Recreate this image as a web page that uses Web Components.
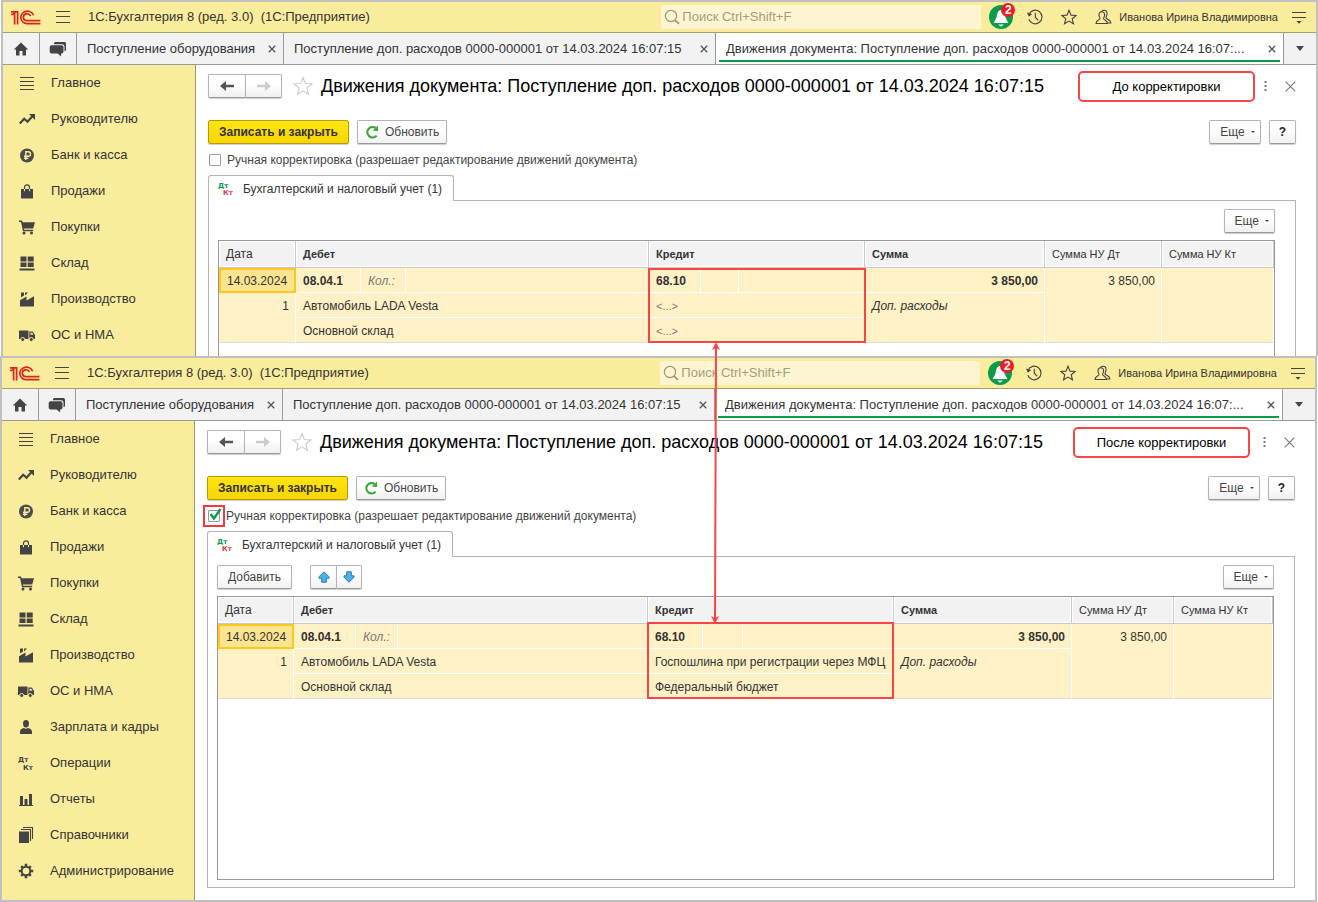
<!DOCTYPE html>
<html lang="ru">
<head>
<meta charset="utf-8">
<title>1С:Бухгалтерия 8 — Движения документа</title>
<style>
  body { margin: 0; background: #fff; color: #333; font: 13px/16px "Liberation Sans", Arial, sans-serif; }
</style>
</head>
<body>
<compare-page>
  <app-window class="before" sections="8">
    <doc-view note="До корректировки">
      <entries-table slot="table" variant="before"></entries-table>
    </doc-view>
  </app-window>
  <app-window class="after" sections="13">
    <doc-view note="После корректировки" manual>
      <entries-table slot="table" variant="after"></entries-table>
    </doc-view>
  </app-window>
</compare-page>

<script>
const ICONS = {
  logo: [30, 15, '<g fill="none" stroke="#da251d" stroke-width="1.7"><path d="M0 4.5h1.6L3.6 3v11.4"/><path d="M0 1.800H6.600v12.600"/><path d="M22.6 5.2A6.6 6.2 0 1 0 16 13.6h13.4"/><path d="M19.5 6A3.7 3.4 0 1 0 16 10.6h13.4"/></g>'],
  burger: [14, 14, '<path d="M0 1.500h14M0 6.500h14M0 12.500h14" stroke="#444" stroke-width="1"/>'],
  search: [16, 16, '<g fill="none" stroke="#9d966d" stroke-width="1.2"><circle cx="7" cy="7" r="5.6"/><path d="m11 11.2 4 3.6" stroke-width="1.8"/></g>'],
  bell: [24, 26, '<circle cx="12" cy="13" r="12" fill="#0a9b4b"/><path d="M11.500 6c-2.800.8-3.300 4-3.800 6.500-.5 2.400-2 4-3 6.500h14.600c-1-2.500-2.500-4.100-3-6.500-.5-2.500-1-5.700-4.800-6.500zM9.200 20.500h5.600L12 22.800z" fill="#fff"/>'],
  history: [16, 16, '<g fill="none" stroke="#444" stroke-width="1.1"><path d="M2 5.200A6.800 6.800 0 1 1 1.800 10.300"/><path d="M8.300 3.800V8.200l3 3.200"/></g><path d="m0 3.500 1.800 4.200L5.300 5z" fill="#444"/>'],
  star: [16, 16, '<path d="m8 1.200 2 4.900 5.200.3-4 3.400 1.300 5L8 12.100l-4.500 2.700 1.300-5-4-3.400 5.200-.3z" fill="none" stroke="#444" stroke-width="1.100"/>'],
  bigstar: [20, 20, '<path d="m10 1.500 2.400 6 6.400.4-5 4.100 1.700 6.300L10 14.800l-5.500 3.500 1.700-6.300-5-4.100 6.400-.4z" fill="#fff" stroke="#ccc" stroke-width="1.100"/>'],
  users: [18, 16, '<g fill="#faec9d" stroke="#444" stroke-width="1.100"><path d="M6 5C6 2.500 7 1.200 9 1.200s3.200 1.300 3 3.800c-.1 1.800-1 2.800-1 3.800.3 1.800 4.700 1.500 4.900 5.200H12"/><path d="M4 6c0-2 1-3.300 2.800-3.300S9.600 4 9.600 6c0 1.600-.9 2.500-1.100 3.500.3 1.700 4 1.700 4 5H1c0-3.300 3.800-3.300 4.100-5C4.900 8.500 4 7.600 4 6z"/></g>'],
  view: [16, 16, '<path d="M1 3.500h14M1 8.500h14" stroke="#444" stroke-width="1.200"/><path d="M5.500 12h5L8 14.800z" fill="#444"/>'],
  home: [16, 16, '<path d="m8 1.500 7.200 7H13v6H9.500V10h-3v4.500H3v-6H.8z" fill="#444"/>'],
  chat: [18, 16, '<path d="M5 3.300V2.500C5 1.500 5.700 1 6.700 1h8.500C16.200 1 17 1.700 17 2.700v5.800c0 1-.6 1.700-1.500 1.800V5.800c0-1.600-.8-2.500-2.500-2.500z" fill="#444"/><path d="M2.700 4.300h9.800c1.200 0 2 .8 2 2v4.200c0 1.200-.8 2-2 2h-.4V15.500l-3.600-3H2.700c-1.200 0-2-.8-2-2V6.300c0-1.200.8-2 2-2z" fill="#444"/>'],
  cross: [8, 8, '<path d="m.8.8 6.400 6.400M7.200.8.8 7.200" stroke="#555" stroke-width="1.300"/>'],
  close: [11, 11, '<path d="m.7.7 9.600 9.600M10.300.7.7 10.300" stroke="#777" stroke-width="1.100"/>'],
  caret: [8, 5, '<path d="M0 0h8L4 5z" fill="#444"/>'],
  minicaret: [4, 2, '<path d="M0 0h4L2 2z" fill="#444"/>'],
  dots: [3, 12, '<path d="M.5 1h2v2h-2zM.5 5h2v2h-2zM.5 9h2v2h-2z" fill="#777"/>'],
  back: [16, 12, '<path d="M1 6 7 1v3.800h8v2.400H7V11z" fill="#555"/>'],
  forward: [16, 12, '<path d="M15 6 9 1v3.800H1v2.400h8V11z" fill="#ccc"/>'],
  refresh: [14, 14, '<path d="M11.600 10.600A5.200 5.200 0 1 1 10.600 3" fill="none" stroke="#3aa63a" stroke-width="2.200"/><path d="M7.800 5.800 13 6V.6z" fill="#3aa63a"/>'],
  up: [12, 12, '<path d="m6 .8 5 5v1.400H8.300v4H3.700v-4H1V5.800z" fill="#4cb1ee" stroke="#3179a8" stroke-width="1"/>'],
  down: [12, 12, '<path d="m6 11.200 5-5V4.800H8.300v-4H3.700v4H1v1.400z" fill="#4cb1ee" stroke="#3179a8" stroke-width="1"/>'],
  dtkt: [16, 16, '<g font-family="DejaVu Sans" font-weight="bold" font-size="7"><text x="0" y="7" fill="#0a9b4b">Дт</text><text x="5" y="14" fill="#e04040">Кт</text></g>'],
  main: [16, 16, '<path d="M1 2.500h14M1 6.500h14M1 10.500h14M1 14.500h14" stroke="#444" stroke-width="1.100"/>'],
  trend: [16, 16, '<path d="m.8 12.500 4.400-4.700 3.300 3 4.700-5.200" fill="none" stroke="#444" stroke-width="2.200"/><path d="M10 3h6v6z" fill="#444"/>'],
  ruble: [16, 16, '<circle cx="8" cy="8.500" r="7" fill="#4d4d4d"/><path d="M6.800 13V4.800h2.500a2.200 2.200 0 0 1 0 4.400H5M5 11.200h4.300" fill="none" stroke="#faec9d" stroke-width="1.400"/>'],
  bag: [16, 16, '<path d="M2 6h12v9.500H2z" fill="#444"/><path d="M5.500 8V4.500C5.500 1 10.500 1 10.500 4.500V8" fill="none" stroke="#444" stroke-width="1.200"/><path d="M5.500 6v2.200M10.500 6v2.200" stroke="#faec9d" stroke-width="1"/>'],
  cart: [16, 16, '<path d="M0 1.500h3l.7 1.700H16l-1.800 6.300H4.800l.4 1.300h9v1.400H4L2 3H0z" fill="#444"/><circle cx="5" cy="14" r="1.500" fill="#444"/><circle cx="12.500" cy="14" r="1.500" fill="#444"/>'],
  stock: [16, 16, '<path d="M1.500 1.500h6v5h-6zM8.700 1.500h6v5h-6zM1.500 7.500h6v4.500h-6zM8.700 7.500h6v4.500h-6zM.5 13.500h15v2H.5z" fill="#444"/>'],
  factory: [16, 16, '<path d="M1 15.500V9.200l6.500-3.700v4l7.500-4.200v10.200z" fill="#444"/><path d="M2 1.500h3v3L2 6.500zM6 1.500h3L6 4.500z" fill="#444"/>'],
  truck: [16, 16, '<path d="M0 3.500h9.500v8.500H0z" fill="#444"/><path d="M10.300 4.500h3.400l2.300 3.300v4.200h-5.700z" fill="#444"/><path d="M11.500 5.800h1.800l1.200 2h-3z" fill="#faec9d"/><g fill="#444" stroke="#faec9d"><circle cx="3.700" cy="12.500" r="2"/><circle cx="12.300" cy="12.500" r="2"/></g>'],
  person: [16, 16, '<path d="M5 4.500C5 2 6.300 1 8 1s3 1 3 3.500S9.800 8.500 8 8.500 5 7 5 4.500zM2 15v-2c0-2.500 1.500-3.500 4-4 1.300.9 2.700.9 4 0 2.500.5 4 1.500 4 4v2z" fill="#444"/>'],
  ops: [16, 16, '<g font-family="DejaVu Sans" font-weight="bold" font-size="7" fill="#444"><text x="0" y="7">Дт</text><text x="5" y="15">Кт</text></g>'],
  chart: [16, 16, '<path d="M1 14h14v1H1zM2 5h3v9H2zM6.500 8h3v6h-3zM11 3h3v11h-3z" fill="#444"/>'],
  books: [16, 18, '<path d="M1 5.500h10V17H1z" fill="#444"/><path d="M3 3.500h9.500V15M5 1.500h9.500V13" fill="none" stroke="#444" stroke-width="1.100"/>'],
  gear: [16, 16, '<g transform="translate(8 8)"><circle r="4.300" fill="none" stroke="#444" stroke-width="2"/><g fill="#444"><path d="M-1.300-7.200h2.600v2.700h-2.600zM-1.300 4.500h2.600v2.700h-2.600zM-7.200-1.300h2.700v2.600h-2.700zM4.500-1.300h2.700v2.600H4.500z"/><path transform="rotate(45)" d="M-1.200-6.800h2.400v2.300h-2.400zM-1.200 4.500h2.400v2.300h-2.400zM-6.800-1.200h2.300v2.400h-2.300zM4.500-1.200h2.300v2.400H4.500z"/></g></g>']
};

const SECTIONS = [
  ['main', 'Главное'], ['trend', 'Руководителю'], ['ruble', 'Банк и касса'], ['bag', 'Продажи'],
  ['cart', 'Покупки'], ['stock', 'Склад'], ['factory', 'Производство'], ['truck', 'ОС и НМА'],
  ['person', 'Зарплата и кадры'], ['ops', 'Операции'], ['chart', 'Отчеты'], ['books', 'Справочники'],
  ['gear', 'Администрирование']
];

const define = (name, render) => customElements.define(name, class extends HTMLElement {
  connectedCallback() {
    if (this.shadowRoot) return;
    this.attachShadow({ mode: 'open' }).innerHTML = render(this);
  }
});

define('ui-icon', el => {
  const [w, h, body] = ICONS[el.getAttribute('name')];
  return `<style>
    :host { display: block; flex: none; width: ${w}px; height: ${h}px; }
    svg { display: block; }
  </style><svg width="${w}" height="${h}" viewBox="0 0 ${w} ${h}" aria-hidden="true">${body}</svg>`;
});

define('ui-button', el => `<style>
  :host { display: block; flex: none; }
  button {
    box-sizing: border-box; width: 100%; height: 24px; padding: 0 var(--pad, 10px); display: flex; align-items: center;
    justify-content: center; gap: 6px; border: 1px solid #b3b3b3; border-bottom-color: #999; border-radius: 2px;
    background: linear-gradient(#fff 40%, #f0f0f0); box-shadow: 0 1px 1px #0003; color: #444;
    font: inherit; font-size: 12px; white-space: nowrap;
  }
  :host([primary]) button { background: linear-gradient(#ffe512, #f7d500); border-color: #b39b00; color: #333; font-weight: bold; }
  :host([menu]) button { padding: 0 5px 0 10px; }
  :host([first]) button { border-radius: 2px 0 0 2px; border-right: 0; }
  :host([last]) button { border-radius: 0 2px 2px 0; }
  :host([strong]) button { font-weight: bold; color: #222; }
</style><button type="button" aria-label="${el.getAttribute('label') || el.textContent.trim()}"><slot></slot></button>`);

define('app-topbar', () => `<style>
  :host { display: flex; align-items: center; height: 30px; padding: 0 9px 0 8px; background: #faec9d; border-bottom: 1px solid #a89f6b; }
  ui-icon[name=burger] { margin-left: 15px; }
  .title { flex: 1; margin-left: 18px; white-space: pre; overflow: hidden; }
  .search { display: flex; align-items: center; gap: 2px; box-sizing: border-box; width: 320px; height: 24px; padding: 0 3px; background: #fdf5d2; border-radius: 2px; }
  input { flex: 1; min-width: 0; border: 0; padding: 0; background: none; font: inherit; color: #333; }
  input::placeholder { color: #a29c7e; opacity: 1; }
  .bell { position: relative; margin-left: 8px; }
  .badge { position: absolute; right: -2px; top: -1px; width: 14px; height: 14px; border-radius: 7px; background: #ed1c24; color: #fff; font-size: 12px; font-weight: bold; line-height: 14px; text-align: center; }
  .tools { display: flex; gap: 18px; margin: 0 6px 0 14px; }
  .user { font-size: 11px; color: #333; text-decoration: none; margin-right: 13px; }
</style>
<ui-icon name="logo"></ui-icon><ui-icon name="burger"></ui-icon>
<span class="title">1С:Бухгалтерия 8 (ред. 3.0)  (1С:Предприятие)</span>
<label class="search"><ui-icon name="search"></ui-icon><input type="search" placeholder="Поиск Ctrl+Shift+F" aria-label="Поиск"></label>
<span class="bell"><ui-icon name="bell"></ui-icon><span class="badge">2</span></span>
<span class="tools"><ui-icon name="history"></ui-icon><ui-icon name="star"></ui-icon><ui-icon name="users"></ui-icon></span>
<a class="user" href="#user">Иванова Ирина Владимировна</a>
<ui-icon name="view"></ui-icon>`);

define('app-tab', () => `<style>
  :host { position: relative; display: flex; align-items: center; gap: 9px; box-sizing: border-box; padding: 0 7px 0 10px; border-right: 1px solid #999; background: #f2f2f2; }
  :host([current]) { flex: 1; min-width: 0; background: #fff; }
  :host([current])::after { content: ""; position: absolute; left: 3px; right: 3px; bottom: 2px; height: 2px; background: #0a9b4b; }
  a { flex: 1; min-width: 0; color: #333; text-decoration: none; white-space: nowrap; overflow: hidden; text-overflow: ellipsis; }
  button { display: block; padding: 0; border: 0; background: none; }
</style><a href="#tab"><slot></slot></a><button type="button" aria-label="Закрыть вкладку"><ui-icon name="cross"></ui-icon></button>`);

define('app-tabs', () => `<style>
  :host { display: flex; height: 31px; background: #f2f2f2; border-bottom: 1px solid #999; }
  .square { display: grid; place-items: center; box-sizing: border-box; width: 37px; padding: 0; border: 0; border-right: 1px solid #999; background: none; }
  .more { width: 32px; border-right: 0; }
  .short { width: 207px; }
  .long { width: 432px; }
</style>
<button class="square" type="button" aria-label="Начальная страница"><ui-icon name="home"></ui-icon></button>
<button class="square" type="button" aria-label="Обсуждения"><ui-icon name="chat"></ui-icon></button>
<app-tab class="short">Поступление оборудования</app-tab>
<app-tab class="long">Поступление доп. расходов 0000-000001 от 14.03.2024 16:07:15</app-tab>
<app-tab current>Движения документа: Поступление доп. расходов 0000-000001 от 14.03.2024 16:07:...</app-tab>
<button class="square more" type="button" aria-label="Все вкладки"><ui-icon name="caret"></ui-icon></button>`);

define('side-nav', el => `<style>
  :host { display: block; flex: none; box-sizing: border-box; width: 193px; padding-bottom: 3px; background: #faec9d; border-right: 1px solid #a09a6a; }
  a { display: flex; align-items: center; gap: 16px; height: 36px; padding-left: 16px; color: #333; text-decoration: none; white-space: nowrap; }
</style><nav>${SECTIONS.slice(0, +el.getAttribute('count')).map(([icon, name]) =>
  `<a href="#${icon}"><ui-icon name="${icon}"></ui-icon>${name}</a>`).join('')}</nav>`);

define('doc-view', el => {
  const manual = el.hasAttribute('manual');
  return `<style>
  :host { display: flex; flex-direction: column; flex: 1; min-width: 0; padding: 5px 20px var(--bottom) 12px; background: #fff; }
  .head { display: flex; align-items: center; height: 32px; }
  .nav { display: flex; margin-right: 11px; }
  .nav ui-button { width: 37px; --pad: 0; }
  h1 { flex: 1; min-width: 0; margin: 0 0 0 8px; font-size: 18px; line-height: 24px; font-weight: normal; color: #000; white-space: nowrap; }
  .note { box-sizing: border-box; width: 177px; height: 31px; margin-right: var(--note-gap); border: 2px solid #f94545; border-radius: 5px; line-height: 27px; text-align: center; color: #000; }
  .plain { display: grid; place-items: center; width: 16px; height: 16px; padding: 0; border: 0; background: none; }
  .plain.close { width: 11px; margin: 0 0 0 12px; }
  .bar { display: flex; gap: 8px; margin-top: 18px; }
  .push { margin-left: auto; }
  .renew { --pad: 7px; }
  .help { --pad: 9px; }
  .check { display: flex; align-items: center; gap: 6px; height: 16px; margin: 8px 0 7px 1px; color: #444; font-size: 12px; }
  .box { position: relative; display: flex; }
  input { appearance: none; box-sizing: border-box; width: 12px; height: 12px; margin: 0; border: 1px solid #999; border-radius: 1px; background: #fff; }
  .box svg { position: absolute; left: 1px; top: -2px; }
  .mark { position: absolute; inset: -5px; border: 2px solid #f0393e; }
  .tab { position: relative; align-self: flex-start; display: flex; align-items: center; gap: 9px; box-sizing: border-box; height: 26px; margin-bottom: -1px; padding: 0 11px 0 9px; background: #fff; border: 1px solid #b3b3b3; border-bottom: 0; border-radius: 3px 3px 0 0; }
  .tab a { color: #333; text-decoration: none; font-size: 12px; }
  .panel { flex: 1; display: flex; flex-direction: column; padding: 8px 20px var(--panel-bottom) 9px; border: 1px solid #b3b3b3; border-bottom-width: var(--edge); }
  .panel .bar { margin: 0 0 7px; gap: 18px; }
  .pair { display: flex; }
  .pair ui-button { width: 26px; --pad: 0; }
</style>
<div class="head">
  <div class="nav"><ui-button first label="Назад"><ui-icon name="back"></ui-icon></ui-button><ui-button last label="Вперед"><ui-icon name="forward"></ui-icon></ui-button></div>
  <ui-icon name="bigstar"></ui-icon>
  <h1>Движения документа: Поступление доп. расходов 0000-000001 от 14.03.2024 16:07:15</h1>
  <div class="note">${el.getAttribute('note')}</div>
  <button class="plain" type="button" aria-label="Действия"><ui-icon name="dots"></ui-icon></button>
  <button class="plain close" type="button" aria-label="Закрыть"><ui-icon name="close"></ui-icon></button>
</div>
<div class="bar">
  <ui-button primary>Записать и закрыть</ui-button>
  <ui-button class="renew"><ui-icon name="refresh"></ui-icon>Обновить</ui-button>
  <ui-button class="push" menu>Еще<ui-icon name="minicaret"></ui-icon></ui-button>
  <ui-button class="help" strong>?</ui-button>
</div>
<div class="check">
  <span class="box"><input type="checkbox" id="manual" ${manual ? 'checked' : ''}>${manual ? '<svg width="13" height="13" viewBox="0 0 13 13"><path d="m1.500 6 3.500 4.500L11.500 1" fill="none" stroke="#0a9b4b" stroke-width="2.400"/></svg><span class="mark"></span>' : ''}</span>
  <label for="manual">Ручная корректировка (разрешает редактирование движений документа)</label>
</div>
<div class="tab"><ui-icon name="dtkt"></ui-icon><a href="#entries">Бухгалтерский и налоговый учет (1)</a></div>
<section class="panel">
  <div class="bar">
    ${manual ? `<ui-button>Добавить</ui-button><div class="pair"><ui-button first label="Вверх"><ui-icon name="up"></ui-icon></ui-button><ui-button last label="Вниз"><ui-icon name="down"></ui-icon></ui-button></div>` : ''}
    <ui-button class="push" menu>Еще<ui-icon name="minicaret"></ui-icon></ui-button>
  </div>
  <slot name="table"></slot>
</section>`;
});

define('entries-table', el => {
  const after = el.getAttribute('variant') === 'after';
  const cols = after ? [76, 62, 42, 0, 55, 40, 151, 178, 102, 99] : [77, 65, 45, 0, 52, 38, 126, 180, 117, 112];
  return `<style>
  :host { display: block; flex: 1; border: 1px solid #999; border-bottom-width: var(--edge); background: #fff; }
  table { width: 100%; table-layout: fixed; border-collapse: separate; border-spacing: 0; }
  th, td { box-sizing: border-box; padding: 0 6px 0 7px; white-space: nowrap; text-align: left; border-right: 1px solid #fff; border-bottom: 1px solid #fff; }
  th { height: 27px; background: #f2f2f2; border-color: #c8c8c8; box-shadow: inset 0 0 0 1px #fff; font-size: 11px; line-height: 16px; }
  th.light { font-weight: normal; }
  th.day { font-size: 12px; }
  td { height: 25px; padding-top: 2px; background: #fef1c6; font-size: 12px; line-height: 16px; }
  td.top { vertical-align: top; padding-top: 5px; }
  td.last { border-bottom-color: #ddd; }
  .num { text-align: right; }
  td.date { padding: 1px 6px 0; background: #fae490; border: 2px solid #fcc81e; }
  .hint { color: #777; }
  .empty { color: #777; font-size: 11px; }
  .anchor { position: relative; }
  .frame { position: absolute; left: -1px; top: ${after ? -2 : 0}px; width: ${after ? 247 : 218}px; height: ${after ? 77 : 75}px; box-sizing: border-box; border: 2px solid #f94545; }
  .arrow { position: absolute; left: 59px; bottom: 100%; }
</style>
<table>
  <colgroup>${cols.map(w => w ? `<col style="width:${w}px">` : '<col>').join('')}</colgroup>
  <thead><tr><th class="light day">Дата</th><th colspan="3">Дебет</th><th colspan="3">Кредит</th><th>Сумма</th><th class="light">Сумма НУ Дт</th><th class="light">Сумма НУ Кт</th></tr></thead>
  <tbody>
    <tr><td class="date">14.03.2024</td><td><b>08.04.1</b></td><td class="hint"><i>Кол.:</i></td><td></td>
      <td class="anchor"><b>68.10</b><span class="frame">${after ? '<svg class="arrow" width="14" height="282" viewBox="0 0 14 282"><path d="M8 4 7 278" fill="none" stroke="#f94545" stroke-width="2"/><path d="m8 0 4 8-4-2-4 2zM7 282l4-8-4 2-4-2z" fill="#f94545"/></svg>' : ''}</span></td><td></td><td></td>
      <td class="num"><b>3 850,00</b></td><td class="num top last" rowspan="3">3 850,00</td><td class="last" rowspan="3"></td></tr>
    <tr><td class="num top last" rowspan="2">1</td><td colspan="3">Автомобиль LADA Vesta</td>
      <td colspan="3">${after ? 'Госпошлина при регистрации через МФЦ' : '<span class="empty">&lt;...&gt;</span>'}</td><td class="top last" rowspan="2"><i>Доп. расходы</i></td></tr>
    <tr><td class="last" colspan="3">Основной склад</td><td class="last" colspan="3">${after ? 'Федеральный бюджет' : '<span class="empty">&lt;...&gt;</span>'}</td></tr>
  </tbody>
</table>`;
});

define('app-window', el => `<style>
  :host { display: flex; flex-direction: column; border: 2px solid #c0c0c0; }
  .body { flex: 1; display: flex; }
</style>
<app-topbar></app-topbar><app-tabs></app-tabs>
<div class="body"><side-nav count="${el.getAttribute('sections')}"></side-nav><slot></slot></div>`);

define('compare-page', () => `<style>
  :host { display: flex; flex-direction: column; min-height: 100vh; }
  ::slotted(.before) { margin-left: 1px; border-bottom: 0; --bottom: 0; --panel-bottom: 0; --edge: 0; --note-gap: 2px; }
  ::slotted(.after) { flex: 1; margin-right: 1px; --bottom: 12px; --panel-bottom: 7px; --edge: 1px; --note-gap: 6px; }
</style><slot></slot>`);
</script>
</body>
</html>
